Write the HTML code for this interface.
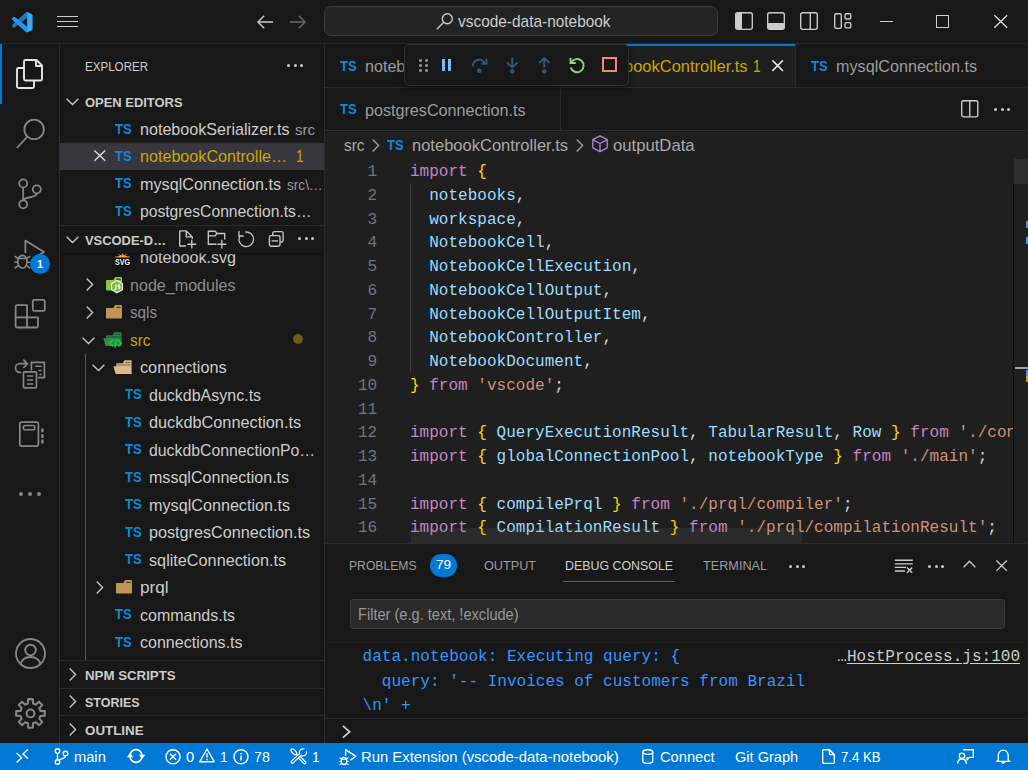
<!DOCTYPE html>
<html><head><meta charset="utf-8"><title>vscode-data-notebook</title>
<style>
*{box-sizing:border-box;margin:0;padding:0}
html,body{width:1028px;height:770px;overflow:hidden;background:#181818}
body{font-family:"Liberation Sans",sans-serif;font-size:15px;color:#ccc;position:relative}
.abs{position:absolute}
.t{position:absolute;white-space:pre;line-height:20px;transform-origin:0 0}
svg{position:absolute;overflow:visible}
.c{position:absolute;white-space:pre;font-family:"Liberation Mono",monospace;font-size:16px;line-height:20px;letter-spacing:0.019px}
.k{color:#c586c0}.b{color:#ffd700}.v{color:#9cdcfe}.s{color:#ce9178}.p{color:#d4d4d4}
</style></head><body>
<div class="abs" style="left:325px;top:44px;width:703px;height:499px;background:#1f1f1f;"></div>
<div class="abs" style="left:0px;top:43px;width:1028px;height:1px;background:#2b2b2b;"></div>
<div class="abs" style="left:59px;top:44px;width:1px;height:699px;background:#2b2b2b;"></div>
<div class="abs" style="left:324px;top:44px;width:1px;height:699px;background:#2b2b2b;"></div>
<svg style="left:11.9px;top:11.8px;" width="20.4" height="20.4" viewBox="0 0 100 100"><path d="M96.460 10.800 75.860.880C73.470-.270 70.620.210 68.750 2.080L29.320 38.040 12.150 25C10.550 23.790 8.310 23.890 6.830 25.240L1.320 30.250C-.490 31.900-.490 34.760 1.320 36.410L16.210 50 1.320 63.580C-.490 65.240-.490 68.090 1.320 69.750L6.830 74.760C8.310 76.110 10.550 76.210 12.150 75L29.320 61.960 68.750 97.920C70.620 99.790 73.470 100.270 75.860 99.120L96.470 89.200C98.630 88.160 100 85.970 100 83.570V16.430C100 14.030 98.630 11.840 96.460 10.800zM75 72.700 45.100 50 75 27.300z" fill="#2794e4" fill-rule="evenodd"/><path d="M1.320 63.580C-.490 65.240-.490 68.090 1.320 69.750L6.830 74.760C8.310 76.110 10.550 76.210 12.150 75L75 27.300V1.500C72.500.300 70.200.800 68.750 2.080z" fill="#1c78c0"/><path d="M1.320 36.410C-.490 34.760-.490 31.900 1.320 30.250L6.830 25.240C8.310 23.890 10.550 23.790 12.150 25L75 72.700V98.500C72.500 99.700 70.200 99.200 68.750 97.920z" fill="#2895e6"/><path d="M75 .600C75.300.700 75.600.750 75.860.880L96.460 10.800C98.630 11.840 100 14.030 100 16.430V83.570C100 85.970 98.630 88.160 96.470 89.200L75.860 99.120C75.600 99.250 75.300 99.300 75 99.400z" fill="#39abf6"/></svg>
<div class="abs" style="left:57px;top:16.0px;width:21px;height:1.3px;background:#ccc;"></div>
<div class="abs" style="left:57px;top:21.0px;width:21px;height:1.3px;background:#ccc;"></div>
<div class="abs" style="left:57px;top:26.0px;width:21px;height:1.3px;background:#ccc;"></div>
<svg style="left:257px;top:15px;" width="16" height="14" viewBox="0 0 16 14"><path d="M7.2.8.9 7l6.3 6.2M1 7h15" fill="none" stroke="#ccc" stroke-width="1.35"/></svg>
<svg style="left:289.5px;top:15px;" width="16" height="14" viewBox="0 0 16 14"><path d="M8.8.8 15.1 7l-6.3 6.2M15 7H0" fill="none" stroke="#6a6a6a" stroke-width="1.35"/></svg>
<div class="abs" style="left:324px;top:6px;width:394px;height:30px;background:#242424;border:1px solid #3d3d3d;border-radius:7px"></div>
<svg style="left:435.5px;top:12px;" width="18" height="18" viewBox="0 0 18 18"><circle cx="11.3" cy="6.7" r="5" fill="none" stroke="#ccc" stroke-width="1.35"/><path d="M7.8 10.2.8 17.2" stroke="#ccc" stroke-width="1.35"/></svg>
<span class="t" style="left:458.40px;top:12px;font-size:15.7px;color:#ccc;transform:scaleX(0.9829);">vscode-data-notebook</span>
<svg style="left:735px;top:12px;" width="18" height="18" viewBox="0 0 18 18"><rect x=".7" y=".7" width="16.6" height="16.6" rx="2" fill="none" stroke="#ccc" stroke-width="1.35"/><path d="M1 2.5a1.5 1.5 0 0 1 1.5-1.5H7v16H2.5A1.5 1.5 0 0 1 1 15.5z" fill="#ccc"/></svg>
<svg style="left:767px;top:12px;" width="18" height="18" viewBox="0 0 18 18"><rect x=".7" y=".7" width="16.6" height="16.6" rx="2" fill="none" stroke="#ccc" stroke-width="1.35"/><path d="M1 11h16v4.5a1.5 1.5 0 0 1-1.5 1.5h-13A1.5 1.5 0 0 1 1 15.5z" fill="#ccc"/></svg>
<svg style="left:800px;top:12px;" width="18" height="18" viewBox="0 0 18 18"><rect x=".7" y=".7" width="16.6" height="16.6" rx="2" fill="none" stroke="#ccc" stroke-width="1.35"/><path d="M10.3 1v16" stroke="#ccc" stroke-width="1.35"/></svg>
<svg style="left:833.8px;top:13px;" width="18" height="16" viewBox="0 0 18 16"><rect x=".7" y=".7" width="6.6" height="14.6" rx="1.5" fill="none" stroke="#ccc" stroke-width="1.35"/><rect x="11" y=".7" width="5.8" height="5.3" rx="1.5" fill="none" stroke="#ccc" stroke-width="1.35"/><rect x="11" y="9.6" width="5.8" height="5.3" rx="1.5" fill="none" stroke="#ccc" stroke-width="1.35"/></svg>
<div class="abs" style="left:880px;top:21px;width:13px;height:1.2px;background:#ccc;"></div>
<div class="abs" style="left:936px;top:15px;width:13px;height:13px;background:transparent;border:1.2px solid #ccc"></div>
<svg style="left:993.5px;top:15px;" width="13.5" height="13" viewBox="0 0 13.5 13"><path d="M.3.3 13.2 12.7M13.2.3.3 12.7" stroke="#ddd" stroke-width="1.3"/></svg>
<div class="abs" style="left:0px;top:44px;width:2.3px;height:59.5px;background:#0078d4;"></div>
<svg style="left:16px;top:59px;" width="27" height="30" viewBox="0 0 27 30"><path d="M9.5 1h11l5.5 5.5V20a1.5 1.5 0 0 1-1.5 1.500H9.5A1.500 1.500 0 0 1 8 20V2.500A1.500 1.500 0 0 1 9.500 1zM20 1.300V7h6" fill="none" stroke="#e4e4e4" stroke-width="1.900" stroke-linejoin="round"/><path d="M8 9H2.500A1.500 1.500 0 0 0 1 10.500V27.500A1.500 1.500 0 0 0 2.500 29H16.500A1.500 1.500 0 0 0 18 27.500V21.500" fill="none" stroke="#e4e4e4" stroke-width="1.900"/></svg>
<svg style="left:0px;top:0px;" width="60" height="200" viewBox="0 0 60 200"><circle cx="34.100" cy="129.400" r="9.750" fill="none" stroke="#868686" stroke-width="1.800"/><path d="M27.300 136.600 16.900 148" stroke="#868686" stroke-width="1.800"/></svg>
<svg style="left:0px;top:0px;" width="60" height="220" viewBox="0 0 60 220"><circle cx="23.200" cy="183.400" r="4" fill="none" stroke="#868686" stroke-width="1.800"/><circle cx="23.200" cy="204.300" r="4" fill="none" stroke="#868686" stroke-width="1.800"/><circle cx="36.800" cy="189.300" r="4" fill="none" stroke="#868686" stroke-width="1.800"/><path d="M23.200 187.400V200.300M36.800 193.300C36.800 198.500 25 196 23.300 200.300" fill="none" stroke="#868686" stroke-width="1.800"/></svg>
<svg style="left:0px;top:0px;" width="60" height="280" viewBox="0 0 60 280"><path d="M25.400 253V240.600L44 251.900 36 257" fill="none" stroke="#868686" stroke-width="1.800" stroke-linejoin="round"/><ellipse cx="22.400" cy="261.700" rx="4.700" ry="6.300" fill="none" stroke="#868686" stroke-width="1.700"/><path d="M18 258.600H26.800M14.600 256.200 18.200 258.500M30.200 256.200 26.600 258.500M14.300 262.300H17.700M27.100 262.300H30.500M14.600 268.300 18.200 265.600M30.200 268.300 26.600 265.600" fill="none" stroke="#868686" stroke-width="1.500"/></svg>
<div class="abs" style="left:30px;top:253.7px;width:20.2px;height:20.2px;background:#0078d4;border-radius:50%"></div>
<span class="t" style="left:37.10px;top:254px;font-size:10.8px;color:#fff;font-weight:700;">1</span>
<svg style="left:0px;top:0px;" width="60" height="340" viewBox="0 0 60 340"><path d="M15.600 306.700A1.500 1.500 0 0 1 17.100 305.200H27V317.300H38V326A1.500 1.500 0 0 1 36.500 327.500H17.100A1.500 1.500 0 0 1 15.600 326zM15.600 317.300H27V327.500" fill="none" stroke="#868686" stroke-width="1.800" stroke-linejoin="round"/><rect x="32.800" y="299.900" width="12" height="11" rx="1.500" fill="none" stroke="#868686" stroke-width="1.800"/></svg>
<svg style="left:0px;top:0px;" width="60" height="400" viewBox="0 0 60 400"><path d="M31.400 370.500V362.300H44.400V377.700H38" fill="none" stroke="#868686" stroke-width="1.700" stroke-linejoin="round"/><path d="M35.300 366.200H41.600M38.500 370.400H41.600M39.500 374.400H41.600" stroke="#868686" stroke-width="1.500"/><rect x="23.500" y="371.800" width="13" height="16" rx="1" fill="none" stroke="#868686" stroke-width="1.700"/><path d="M27 376.100H33.200M27 380H33.200M27 383.900H33.200" stroke="#868686" stroke-width="1.500"/><path d="M21 372.300H19.800A4.300 4.300 0 0 1 19.800 363.700H27M23.300 359.700 27.400 363.800 23.300 368" fill="none" stroke="#868686" stroke-width="1.700"/></svg>
<svg style="left:0px;top:0px;" width="60" height="460" viewBox="0 0 60 460"><rect x="19.800" y="422.100" width="18.600" height="24" rx="1.800" fill="none" stroke="#868686" stroke-width="1.700"/><rect x="23.300" y="425.600" width="11.600" height="4.200" rx="2.100" fill="none" stroke="#868686" stroke-width="1.500"/><path d="M42.400 428.600V432.300M42.400 434.200V438M42.400 439.600V443.600" stroke="#868686" stroke-width="2.400"/></svg>
<div class="abs" style="left:18.6px;top:491.5px;width:4px;height:4px;background:#868686;border-radius:50%"></div>
<div class="abs" style="left:28px;top:491.5px;width:4px;height:4px;background:#868686;border-radius:50%"></div>
<div class="abs" style="left:37.4px;top:491.5px;width:4px;height:4px;background:#868686;border-radius:50%"></div>
<svg style="left:14.5px;top:638px;" width="31" height="31" viewBox="0 0 31 31"><circle cx="15.500" cy="15.500" r="14.500" fill="none" stroke="#868686" stroke-width="1.850"/><circle cx="15.500" cy="12" r="5.300" fill="none" stroke="#868686" stroke-width="1.850"/><path d="M5.500 26c1.500-5 5-7 10-7s8.500 2 10 7" fill="none" stroke="#868686" stroke-width="1.850"/></svg>
<svg style="left:14.5px;top:698px;" width="31" height="31" viewBox="0 0 31 31"><path d="M13.23 1.08L17.77 1.08L18.04 5.52L20.69 6.62L24.02 3.67L27.23 6.88L24.28 10.21L25.38 12.86L29.82 13.13L29.82 17.67L25.38 17.94L24.28 20.59L27.23 23.92L24.02 27.13L20.69 24.18L18.04 25.28L17.77 29.72L13.23 29.72L12.96 25.28L10.31 24.18L6.98 27.13L3.77 23.92L6.72 20.59L5.62 17.94L1.18 17.67L1.18 13.13L5.62 12.86L6.72 10.21L3.77 6.88L6.98 3.67L10.31 6.62L12.96 5.52z" fill="none" stroke="#868686" stroke-width="2.100" stroke-linejoin="round"/><circle cx="15.500" cy="15.400" r="3.900" fill="none" stroke="#868686" stroke-width="2.100"/></svg>
<span class="t" style="left:84.90px;top:57px;font-size:13.4px;color:#cccccc;transform:scaleX(0.8651);">EXPLORER</span>
<div class="abs" style="left:287.0px;top:64.3px;width:3.0px;height:3.0px;background:#ccc;border-radius:50%"></div>
<div class="abs" style="left:293.5px;top:64.3px;width:3.0px;height:3.0px;background:#ccc;border-radius:50%"></div>
<div class="abs" style="left:300.0px;top:64.3px;width:3.0px;height:3.0px;background:#ccc;border-radius:50%"></div>
<svg style="left:66.0px;top:98.0px;" width="13" height="7.5" viewBox="0 0 13 7.5"><path d="M.6.700 6.500 6.600 12.400.700" fill="none" stroke="#c5c5c5" stroke-width="1.350"/></svg>
<span class="t" style="left:84.90px;top:93px;font-size:13.4px;color:#cccccc;font-weight:700;transform:scaleX(0.9668);">OPEN EDITORS</span>
<div class="abs" style="left:60px;top:143px;width:264px;height:27px;background:#37373d;"></div>
<span class="t" style="left:114.90px;top:119px;font-size:14.5px;color:#0a8ae0;font-weight:700;transform:scaleX(0.8958);">TS</span>
<span class="t" style="left:139.90px;top:120px;font-size:15.7px;color:#cccccc;transform:scaleX(1.0272);">notebookSerializer.ts</span>
<span class="t" style="left:294.90px;top:120px;font-size:14.4px;color:#9a9a9a;transform:scaleX(1.0476);">src</span>
<svg style="left:94.3px;top:150.4px;" width="11.6" height="11.2" viewBox="0 0 11.6 11.2"><path d="M.4.400 11.200 10.800M11.200.400.400 10.800" stroke="#ddd" stroke-width="1.350"/></svg>
<span class="t" style="left:114.90px;top:146px;font-size:14.5px;color:#0a8ae0;font-weight:700;transform:scaleX(0.8958);">TS</span>
<span class="t" style="left:139.90px;top:147px;font-size:15.7px;color:#cca700;transform:scaleX(1.0284);">notebookControlle…</span>
<span class="t" style="left:296.40px;top:147px;font-size:15.7px;color:#cca700;transform:scaleX(0.8701);">1</span>
<span class="t" style="left:114.90px;top:173px;font-size:14.5px;color:#0a8ae0;font-weight:700;transform:scaleX(0.8958);">TS</span>
<span class="t" style="left:139.90px;top:175px;font-size:15.7px;color:#cccccc;transform:scaleX(1.0307);">mysqlConnection.ts</span>
<span class="t" style="left:287.40px;top:175px;font-size:14.4px;color:#9a9a9a;transform:scaleX(0.9474);">src\…</span>
<span class="t" style="left:114.90px;top:201px;font-size:14.5px;color:#0a8ae0;font-weight:700;transform:scaleX(0.8958);">TS</span>
<span class="t" style="left:139.90px;top:202px;font-size:15.7px;color:#cccccc;transform:scaleX(0.9989);">postgresConnection.ts…</span>
<div class="abs" style="left:85px;top:354px;width:1px;height:306px;background:#585858;"></div>
<div class="abs" style="left:114.8px;top:255.5px;width:16.7px;height:10.3px;background:#050505;border-radius:2px"></div>
<svg style="left:115.3px;top:252.6px;" width="15.2" height="4.6" viewBox="0 0 15.2 4.6"><path d="M0 4.600V3.700L5 3.100 2.600 .500 6.300 2.400 7.600 0 8.900 2.400 12.600 .500 10.200 3.100 15.200 3.700V4.600z" fill="#ffb13b"/></svg>
<span class="t" style="left:115.30px;top:252px;font-size:9.4px;color:#fff;font-weight:700;transform:scaleX(0.7621);">SVG</span>
<span class="t" style="left:139.90px;top:248px;font-size:15.7px;color:#cccccc;transform:scaleX(1.0297);">notebook.svg</span>
<svg style="left:85.6px;top:277.8px;" width="7.5" height="13" viewBox="0 0 7.5 13"><path d="M.700.600 6.600 6.500.700 12.400" fill="none" stroke="#c5c5c5" stroke-width="1.350"/></svg>
<svg style="left:105.8px;top:277.1px;" width="16" height="13.4" viewBox="0 0 16 13.4"><path d="M0 3.600A.7.700 0 0 1 .700 2.900H7.300L8.800.500A.9.900 0 0 1 9.600 0H15.300A.7.700 0 0 1 16 .700V12.700A.7.700 0 0 1 15.300 13.400H.700A.7.700 0 0 1 0 12.700z" fill="#8bc34a"/><path d="M10.300 2.300H14.700" stroke="#181818" stroke-opacity=".8" stroke-width="1.050"/></svg>
<svg style="left:110.8px;top:280.3px;" width="12.0" height="13.2" viewBox="0 0 12.6 13.6"><path d="M6.300.400 12 3.700v6.400L6.300 13.300.600 10.100V3.700z" fill="#7fb843" stroke="#f5f5f5" stroke-width="1.150"/><path d="M5.300 4.500v4.600c0 .9-1.200 1-1.800.4M9.600 5.200c-1.800-.8-3 .900-1.200 1.500 1.700.5 1.200 2.400-1 1.700" fill="none" stroke="#ffffff" stroke-width="1.200"/></svg>
<span class="t" style="left:129.90px;top:276px;font-size:15.7px;color:#8c8c8c;transform:scaleX(1.0260);">node_modules</span>
<svg style="left:85.6px;top:305.5px;" width="7.5" height="13" viewBox="0 0 7.5 13"><path d="M.700.600 6.600 6.500.700 12.400" fill="none" stroke="#c5c5c5" stroke-width="1.350"/></svg>
<svg style="left:105.6px;top:305px;" width="16" height="13.4" viewBox="0 0 16 13.4"><path d="M0 3.600A.7.700 0 0 1 .700 2.900H7.300L8.800.500A.9.900 0 0 1 9.600 0H15.300A.7.700 0 0 1 16 .700V12.700A.7.700 0 0 1 15.300 13.400H.700A.7.700 0 0 1 0 12.700z" fill="#c09553"/><path d="M10.300 2.300H14.700" stroke="#181818" stroke-opacity=".8" stroke-width="1.050"/></svg>
<span class="t" style="left:129.90px;top:303px;font-size:15.7px;color:#8c8c8c;transform:scaleX(0.9711);">sqls</span>
<svg style="left:82.2px;top:336.5px;" width="13" height="7.5" viewBox="0 0 13 7.5"><path d="M.6.700 6.500 6.600 12.400.700" fill="none" stroke="#c5c5c5" stroke-width="1.350"/></svg>
<svg style="left:103.3px;top:331.9px;" width="18.8" height="14" viewBox="0 0 18.8 14"><path d="M3.300 4A.7.700 0 0 1 4 3.300H9.800L11.200.600A.9.900 0 0 1 12 .200H17.900A.7.700 0 0 1 18.600.900V13.300H3.300z" fill="#2a8050"/><path d="M12.300 2.500H17.300M4.500 5H17.300" stroke="#181818" stroke-opacity=".5" stroke-width=".9"/><path d="M.400 6.200H16.700L18.700 14H2.600z" fill="#2e8b57"/></svg>
<svg style="left:109.2px;top:339.3px;" width="13.2" height="8.6" viewBox="0 0 13.2 8.6"><path d="M4 .800.900 4.200 4 7.600M9.200.800 12.300 4.200 9.200 7.600M7.200 0 6 8.600" fill="none" stroke="#16d416" stroke-width="1.400"/></svg>
<span class="t" style="left:129.90px;top:331px;font-size:15.7px;color:#cca700;transform:scaleX(0.9751);">src</span>
<div class="abs" style="left:292.5px;top:334.2px;width:10px;height:10px;background:#6d5b12;border-radius:50%"></div>
<svg style="left:92.2px;top:364.0px;" width="13" height="7.5" viewBox="0 0 13 7.5"><path d="M.6.700 6.500 6.600 12.400.700" fill="none" stroke="#c5c5c5" stroke-width="1.350"/></svg>
<svg style="left:113.2px;top:359.9px;" width="18.8" height="14" viewBox="0 0 18.8 14"><path d="M3.300 4A.7.700 0 0 1 4 3.300H9.800L11.200.600A.9.900 0 0 1 12 .200H17.900A.7.700 0 0 1 18.600.900V13.300H3.300z" fill="#d9b07c"/><path d="M12.300 2.500H17.300M4.500 5H17.300" stroke="#181818" stroke-opacity=".5" stroke-width=".9"/><path d="M.400 6.200H16.700L18.700 14H2.600z" fill="#deb887"/></svg>
<span class="t" style="left:139.90px;top:358px;font-size:15.7px;color:#cccccc;transform:scaleX(1.0342);">connections</span>
<span class="t" style="left:124.50px;top:384px;font-size:14.5px;color:#0a8ae0;font-weight:700;transform:scaleX(0.8958);">TS</span>
<span class="t" style="left:149.40px;top:386px;font-size:15.7px;color:#cccccc;transform:scaleX(1.0203);">duckdbAsync.ts</span>
<span class="t" style="left:124.50px;top:412px;font-size:14.5px;color:#0a8ae0;font-weight:700;transform:scaleX(0.8958);">TS</span>
<span class="t" style="left:149.40px;top:413px;font-size:15.7px;color:#cccccc;transform:scaleX(1.0381);">duckdbConnection.ts</span>
<span class="t" style="left:124.50px;top:439px;font-size:14.5px;color:#0a8ae0;font-weight:700;transform:scaleX(0.8958);">TS</span>
<span class="t" style="left:149.40px;top:441px;font-size:15.7px;color:#cccccc;transform:scaleX(1.0077);">duckdbConnectionPo…</span>
<span class="t" style="left:124.50px;top:467px;font-size:14.5px;color:#0a8ae0;font-weight:700;transform:scaleX(0.8958);">TS</span>
<span class="t" style="left:149.40px;top:468px;font-size:15.7px;color:#cccccc;transform:scaleX(1.0234);">mssqlConnection.ts</span>
<span class="t" style="left:124.50px;top:494px;font-size:14.5px;color:#0a8ae0;font-weight:700;transform:scaleX(0.8958);">TS</span>
<span class="t" style="left:149.40px;top:496px;font-size:15.7px;color:#cccccc;transform:scaleX(1.0307);">mysqlConnection.ts</span>
<span class="t" style="left:124.50px;top:522px;font-size:14.5px;color:#0a8ae0;font-weight:700;transform:scaleX(0.8958);">TS</span>
<span class="t" style="left:149.40px;top:523px;font-size:15.7px;color:#cccccc;transform:scaleX(1.0321);">postgresConnection.ts</span>
<span class="t" style="left:124.50px;top:549px;font-size:14.5px;color:#0a8ae0;font-weight:700;transform:scaleX(0.8958);">TS</span>
<span class="t" style="left:149.40px;top:551px;font-size:15.7px;color:#cccccc;transform:scaleX(1.0342);">sqliteConnection.ts</span>
<svg style="left:95.6px;top:580.5px;" width="7.5" height="13" viewBox="0 0 7.5 13"><path d="M.700.600 6.600 6.500.700 12.400" fill="none" stroke="#c5c5c5" stroke-width="1.350"/></svg>
<svg style="left:115.5px;top:580.3px;" width="16" height="13.4" viewBox="0 0 16 13.4"><path d="M0 3.600A.7.700 0 0 1 .700 2.900H7.300L8.800.500A.9.900 0 0 1 9.600 0H15.300A.7.700 0 0 1 16 .700V12.700A.7.700 0 0 1 15.300 13.400H.700A.7.700 0 0 1 0 12.700z" fill="#c09553"/><path d="M10.300 2.300H14.700" stroke="#181818" stroke-opacity=".8" stroke-width="1.050"/></svg>
<span class="t" style="left:139.90px;top:578px;font-size:15.7px;color:#cccccc;transform:scaleX(1.0928);">prql</span>
<span class="t" style="left:114.90px;top:604px;font-size:14.5px;color:#0a8ae0;font-weight:700;transform:scaleX(0.8958);">TS</span>
<span class="t" style="left:139.90px;top:606px;font-size:15.7px;color:#cccccc;transform:scaleX(1.0193);">commands.ts</span>
<span class="t" style="left:114.90px;top:632px;font-size:14.5px;color:#0a8ae0;font-weight:700;transform:scaleX(0.8958);">TS</span>
<span class="t" style="left:139.90px;top:633px;font-size:15.7px;color:#cccccc;transform:scaleX(1.0230);">connections.ts</span>
<div class="abs" style="left:60px;top:225px;width:264px;height:27.5px;background:#181818;z-index:3;border-top:1px solid #2b2b2b;box-shadow:0 2px 3px -1px rgba(0,0,0,.4)"></div>
<svg style="left:66.0px;top:235.8px;z-index:4;" width="13" height="7.5" viewBox="0 0 13 7.5"><path d="M.6.700 6.500 6.600 12.400.700" fill="none" stroke="#c5c5c5" stroke-width="1.350"/></svg>
<span class="t" style="left:84.90px;top:231px;font-size:13.4px;color:#cccccc;font-weight:700;transform:scaleX(0.9646);z-index:4;">VSCODE-D…</span>
<svg style="left:170px;top:224px;z-index:4;" width="160" height="32" viewBox="170 224 160 32"><path d="M186 246H179.700V230.900H186.300L192.300 236.900V239M186.300 230.900V236.900H192.300" fill="none" stroke="#c5c5c5" stroke-width="1.350" stroke-linejoin="round"/><path d="M191.800 239.800V248.600M187.400 244.200H196.200" stroke="#c5c5c5" stroke-width="1.350"/></svg>
<svg style="left:170px;top:224px;z-index:4;" width="160" height="32" viewBox="170 224 160 32"><path d="M216.500 244.200H208.300V231.200H215.200L216.800 233.500H224.700V239.500M208.300 235.900H215.200L216.800 233.500" fill="none" stroke="#c5c5c5" stroke-width="1.350" stroke-linejoin="round"/><path d="M221.800 239.800V248.600M217.400 244.200H226.200" stroke="#c5c5c5" stroke-width="1.350"/></svg>
<svg style="left:170px;top:224px;z-index:4;" width="160" height="32" viewBox="170 224 160 32"><path d="M245.200 232.100A7.300 7.300 0 1 1 239.500 236.600" fill="none" stroke="#c5c5c5" stroke-width="1.350"/><path d="M238.900 231V236H243.700" fill="none" stroke="#c5c5c5" stroke-width="1.350"/></svg>
<svg style="left:170px;top:224px;z-index:4;" width="160" height="32" viewBox="170 224 160 32"><rect x="269.400" y="235.600" width="10.600" height="10.600" rx="1.600" fill="none" stroke="#c5c5c5" stroke-width="1.350"/><path d="M271.500 240.900H278" stroke="#c5c5c5" stroke-width="1.350"/><path d="M272.800 235.600V233.200A1.600 1.600 0 0 1 274.400 231.600H281.500A1.600 1.600 0 0 1 283.100 233.200V240.400A1.600 1.600 0 0 1 281.500 242H280" fill="none" stroke="#c5c5c5" stroke-width="1.350"/></svg>
<div class="abs" style="left:298.40000000000003px;top:237.3px;width:3.0px;height:3.0px;background:#ccc;z-index:4;border-radius:50%"></div>
<div class="abs" style="left:304.90000000000003px;top:237.3px;width:3.0px;height:3.0px;background:#ccc;z-index:4;border-radius:50%"></div>
<div class="abs" style="left:311.40000000000003px;top:237.3px;width:3.0px;height:3.0px;background:#ccc;z-index:4;border-radius:50%"></div>
<div class="abs" style="left:60px;top:660px;width:264px;height:28px;background:#181818;z-index:3;border-top:1px solid #2b2b2b"></div>
<svg style="left:69.3px;top:668.1px;z-index:4;" width="7.5" height="13" viewBox="0 0 7.5 13"><path d="M.700.600 6.600 6.500.700 12.400" fill="none" stroke="#c5c5c5" stroke-width="1.350"/></svg>
<span class="t" style="left:84.90px;top:666px;font-size:13.4px;color:#cccccc;font-weight:700;transform:scaleX(0.9900);z-index:4;">NPM SCRIPTS</span>
<div class="abs" style="left:60px;top:688px;width:264px;height:28px;background:#181818;z-index:3;border-top:1px solid #2b2b2b"></div>
<svg style="left:69.3px;top:695.1px;z-index:4;" width="7.5" height="13" viewBox="0 0 7.5 13"><path d="M.700.600 6.600 6.500.700 12.400" fill="none" stroke="#c5c5c5" stroke-width="1.350"/></svg>
<span class="t" style="left:84.90px;top:693px;font-size:13.4px;color:#cccccc;font-weight:700;transform:scaleX(0.9326);z-index:4;">STORIES</span>
<div class="abs" style="left:60px;top:715px;width:264px;height:28px;background:#181818;z-index:3;border-top:1px solid #2b2b2b"></div>
<svg style="left:69.3px;top:723.1px;z-index:4;" width="7.5" height="13" viewBox="0 0 7.5 13"><path d="M.700.600 6.600 6.500.700 12.400" fill="none" stroke="#c5c5c5" stroke-width="1.350"/></svg>
<span class="t" style="left:84.90px;top:721px;font-size:13.4px;color:#cccccc;font-weight:700;transform:scaleX(0.9969);z-index:4;">OUTLINE</span>
<div class="abs" style="left:325px;top:44px;width:703px;height:87.5px;background:#181818;"></div>
<div class="abs" style="left:554px;top:44px;width:241.5px;height:43px;background:#1f1f1f;"></div>
<div class="abs" style="left:554px;top:44px;width:241.5px;height:1.6px;background:#0078d4;"></div>
<div class="abs" style="left:325px;top:87px;width:703px;height:1px;background:#2b2b2b;"></div>
<div class="abs" style="left:325px;top:130px;width:703px;height:1px;background:#2b2b2b;"></div>
<div class="abs" style="left:553.5px;top:44px;width:1px;height:43px;background:#2b2b2b;"></div>
<div class="abs" style="left:795.3px;top:44px;width:1px;height:43px;background:#2b2b2b;"></div>
<div class="abs" style="left:560px;top:88px;width:1px;height:42px;background:#2b2b2b;"></div>
<span class="t" style="left:340.30px;top:56px;font-size:14.5px;color:#0a8ae0;font-weight:700;transform:scaleX(0.8958);">TS</span>
<span class="t" style="left:364.90px;top:57px;font-size:15.7px;color:#9d9d9d;transform:scaleX(1.0272);">notebookSerializer.ts</span>
<span class="t" style="left:567.30px;top:56px;font-size:14.5px;color:#0a8ae0;font-weight:700;transform:scaleX(0.8958);">TS</span>
<span class="t" style="left:591.90px;top:57px;font-size:15.7px;color:#cca700;transform:scaleX(1.0496);">notebookController.ts</span>
<span class="t" style="left:753.40px;top:57px;font-size:15.7px;color:#cca700;transform:scaleX(0.8701);">1</span>
<svg style="left:771.7px;top:60px;" width="11.3" height="11.3" viewBox="0 0 11.3 11.3"><path d="M.4.400 10.900 10.900M10.900.400.400 10.900" stroke="#e6e6e6" stroke-width="1.500"/></svg>
<span class="t" style="left:811.30px;top:56px;font-size:14.5px;color:#0a8ae0;font-weight:700;transform:scaleX(0.8958);">TS</span>
<span class="t" style="left:835.90px;top:57px;font-size:15.7px;color:#9d9d9d;transform:scaleX(1.0307);">mysqlConnection.ts</span>
<span class="t" style="left:340.30px;top:99px;font-size:14.5px;color:#0a8ae0;font-weight:700;transform:scaleX(0.8958);">TS</span>
<span class="t" style="left:364.90px;top:101px;font-size:15.7px;color:#9d9d9d;transform:scaleX(1.0289);">postgresConnection.ts</span>
<svg style="left:961px;top:100px;" width="17.5" height="17.5" viewBox="0 0 17.5 17.5"><rect x=".7" y=".7" width="16.100" height="16.100" rx="1.800" fill="none" stroke="#d0d0d0" stroke-width="1.350"/><path d="M8.750 1V16.500" stroke="#d0d0d0" stroke-width="1.350"/></svg>
<div class="abs" style="left:994.0999999999999px;top:107.5px;width:3.0px;height:3.0px;background:#ccc;border-radius:50%"></div>
<div class="abs" style="left:1000.5999999999999px;top:107.5px;width:3.0px;height:3.0px;background:#ccc;border-radius:50%"></div>
<div class="abs" style="left:1007.0999999999999px;top:107.5px;width:3.0px;height:3.0px;background:#ccc;border-radius:50%"></div>
<div class="abs" style="left:403.5px;top:44px;width:225px;height:42px;background:#181818;z-index:5;border:1px solid #303030;border-radius:5px;box-shadow:0 2px 6px rgba(0,0,0,.5)"></div>
<div class="abs" style="left:419.3px;top:59.3px;width:2.6px;height:2.6px;background:#8b8b8b;z-index:6;border-radius:50%"></div>
<div class="abs" style="left:425.1px;top:59.3px;width:2.6px;height:2.6px;background:#8b8b8b;z-index:6;border-radius:50%"></div>
<div class="abs" style="left:419.3px;top:64.2px;width:2.6px;height:2.6px;background:#8b8b8b;z-index:6;border-radius:50%"></div>
<div class="abs" style="left:425.1px;top:64.2px;width:2.6px;height:2.6px;background:#8b8b8b;z-index:6;border-radius:50%"></div>
<div class="abs" style="left:419.3px;top:69.1px;width:2.6px;height:2.6px;background:#8b8b8b;z-index:6;border-radius:50%"></div>
<div class="abs" style="left:425.1px;top:69.1px;width:2.6px;height:2.6px;background:#8b8b8b;z-index:6;border-radius:50%"></div>
<div class="abs" style="left:442.1px;top:59px;width:2.9px;height:12.3px;background:#75beff;z-index:6;"></div>
<div class="abs" style="left:448.3px;top:59px;width:2.9px;height:12.3px;background:#75beff;z-index:6;"></div>
<svg style="left:471.5px;top:57.5px;z-index:6;" width="16.5" height="15.5" viewBox="0 0 16.5 15.5"><path d="M1 8.500A6.300 6.300 0 0 1 12.800 5" fill="none" stroke="#375777" stroke-width="1.900"/><path d="M9.500 5.800H14.500V.800" fill="none" stroke="#375777" stroke-width="1.900"/><circle cx="7.300" cy="12.800" r="2.300" fill="#375777"/></svg>
<svg style="left:505.5px;top:57px;z-index:6;" width="12.5" height="17" viewBox="0 0 12.5 17"><path d="M6.250.500V10M1 5.500 6.250 10.500 11.500 5.500" fill="none" stroke="#375777" stroke-width="1.900"/><circle cx="6.250" cy="14.500" r="2.300" fill="#375777"/></svg>
<svg style="left:538.3px;top:57px;z-index:6;" width="12.5" height="17" viewBox="0 0 12.5 17"><path d="M6.250 10.500V1M1 6 6.250 1 11.500 6" fill="none" stroke="#375777" stroke-width="1.900"/><circle cx="6.250" cy="14.500" r="2.300" fill="#375777"/></svg>
<svg style="left:569px;top:57.3px;z-index:6;" width="16.5" height="16" viewBox="0 0 16.5 16"><path d="M2.200 5.500A6.600 6.600 0 1 1 1.700 10.500" fill="none" stroke="#89d185" stroke-width="1.950"/><path d="M1.500.800V6H6.800" fill="none" stroke="#89d185" stroke-width="1.950"/></svg>
<div class="abs" style="left:601.8px;top:57px;width:15.6px;height:15.4px;background:transparent;z-index:6;border:2.100px solid #f48771"></div>
<span class="t" style="left:344.40px;top:136px;font-size:15.7px;color:#a9a9a9;transform:scaleX(0.9751);">src</span>
<svg style="left:371.8px;top:138.5px;" width="7.5" height="13" viewBox="0 0 7.5 13"><path d="M.700.600 6.600 6.500.700 12.400" fill="none" stroke="#a0a0a0" stroke-width="1.350"/></svg>
<span class="t" style="left:387.30px;top:135px;font-size:14.5px;color:#0a8ae0;font-weight:700;transform:scaleX(0.8958);">TS</span>
<span class="t" style="left:412.40px;top:136px;font-size:15.7px;color:#a9a9a9;transform:scaleX(1.0530);">notebookController.ts</span>
<svg style="left:576.3px;top:138.5px;" width="7.5" height="13" viewBox="0 0 7.5 13"><path d="M.700.600 6.600 6.500.700 12.400" fill="none" stroke="#a0a0a0" stroke-width="1.350"/></svg>
<svg style="left:591.5px;top:135.3px;" width="16" height="17.5" viewBox="0 0 16 17.5"><path d="M8 .800 15.200 4.600V12.800L8 16.700 .800 12.800V4.600zM.800 4.600 8 8.500 15.200 4.600M8 8.500V16.700" fill="none" stroke="#b180d7" stroke-width="1.350" stroke-linejoin="round"/></svg>
<span class="t" style="left:612.90px;top:136px;font-size:15.7px;color:#a9a9a9;transform:scaleX(1.0630);">outputData</span>
<div class="c" style="left:410.0px;top:162px"><span class="k">import</span><span class="p"> </span><span class="b">{</span></div>
<div class="c" style="left:367.58px;top:162px;color:#6e7681">1</div>
<div class="c" style="left:410.0px;top:186px"><span class="p">  </span><span class="v">notebooks</span><span class="p">,</span></div>
<div class="c" style="left:367.58px;top:186px;color:#6e7681">2</div>
<div class="c" style="left:410.0px;top:210px"><span class="p">  </span><span class="v">workspace</span><span class="p">,</span></div>
<div class="c" style="left:367.58px;top:210px;color:#6e7681">3</div>
<div class="c" style="left:410.0px;top:233px"><span class="p">  </span><span class="v">NotebookCell</span><span class="p">,</span></div>
<div class="c" style="left:367.58px;top:233px;color:#6e7681">4</div>
<div class="c" style="left:410.0px;top:257px"><span class="p">  </span><span class="v">NotebookCellExecution</span><span class="p">,</span></div>
<div class="c" style="left:367.58px;top:257px;color:#6e7681">5</div>
<div class="c" style="left:410.0px;top:281px"><span class="p">  </span><span class="v">NotebookCellOutput</span><span class="p">,</span></div>
<div class="c" style="left:367.58px;top:281px;color:#6e7681">6</div>
<div class="c" style="left:410.0px;top:305px"><span class="p">  </span><span class="v">NotebookCellOutputItem</span><span class="p">,</span></div>
<div class="c" style="left:367.58px;top:305px;color:#6e7681">7</div>
<div class="c" style="left:410.0px;top:328px"><span class="p">  </span><span class="v">NotebookController</span><span class="p">,</span></div>
<div class="c" style="left:367.58px;top:328px;color:#6e7681">8</div>
<div class="c" style="left:410.0px;top:352px"><span class="p">  </span><span class="v">NotebookDocument</span><span class="p">,</span></div>
<div class="c" style="left:367.58px;top:352px;color:#6e7681">9</div>
<div class="c" style="left:410.0px;top:376px"><span class="b">}</span><span class="p"> </span><span class="k">from</span><span class="p"> </span><span class="s">&#x27;vscode&#x27;</span><span class="p">;</span></div>
<div class="c" style="left:357.96px;top:376px;color:#6e7681">10</div>
<div class="c" style="left:357.96px;top:400px;color:#6e7681">11</div>
<div class="c" style="left:410.0px;top:423px"><span class="k">import</span><span class="p"> </span><span class="b">{</span><span class="p"> </span><span class="v">QueryExecutionResult</span><span class="p">, </span><span class="v">TabularResult</span><span class="p">, </span><span class="v">Row</span><span class="p"> </span><span class="b">}</span><span class="p"> </span><span class="k">from</span><span class="p"> </span><span class="s">&#x27;./connections&#x27;</span><span class="p">;</span></div>
<div class="c" style="left:357.96px;top:423px;color:#6e7681">12</div>
<div class="c" style="left:410.0px;top:447px"><span class="k">import</span><span class="p"> </span><span class="b">{</span><span class="p"> </span><span class="v">globalConnectionPool</span><span class="p">, </span><span class="v">notebookType</span><span class="p"> </span><span class="b">}</span><span class="p"> </span><span class="k">from</span><span class="p"> </span><span class="s">&#x27;./main&#x27;</span><span class="p">;</span></div>
<div class="c" style="left:357.96px;top:447px;color:#6e7681">13</div>
<div class="c" style="left:357.96px;top:471px;color:#6e7681">14</div>
<div class="c" style="left:410.0px;top:495px"><span class="k">import</span><span class="p"> </span><span class="b">{</span><span class="p"> </span><span class="v">compilePrql</span><span class="p"> </span><span class="b">}</span><span class="p"> </span><span class="k">from</span><span class="p"> </span><span class="s">&#x27;./prql/compiler&#x27;</span><span class="p">;</span></div>
<div class="c" style="left:357.96px;top:495px;color:#6e7681">15</div>
<div class="c" style="left:410.0px;top:518px"><span class="k">import</span><span class="p"> </span><span class="b">{</span><span class="p"> </span><span class="v">CompilationResult</span><span class="p"> </span><span class="b">}</span><span class="p"> </span><span class="k">from</span><span class="p"> </span><span class="s">&#x27;./prql/compilationResult&#x27;</span><span class="p">;</span></div>
<div class="c" style="left:357.96px;top:518px;color:#6e7681">16</div>
<div class="abs" style="left:410px;top:183px;width:1px;height:190px;background:#3a3a3a;"></div>
<div class="abs" style="left:1014px;top:158.5px;width:14px;height:384.5px;background:#1f1f1f;"></div>
<div class="abs" style="left:1013.3px;top:184px;width:1.2px;height:359px;background:#0a0a0a;"></div>
<div class="abs" style="left:1013.5px;top:159px;width:14.5px;height:25px;background:#2e2f31;"></div>
<div class="abs" style="left:1025.5px;top:221px;width:2.5px;height:6.5px;background:#3794ff;"></div>
<div class="abs" style="left:1025.5px;top:237px;width:2.5px;height:6.5px;background:#3794ff;"></div>
<div class="abs" style="left:1014.5px;top:366.7px;width:13.5px;height:2.3px;background:#a0a0a0;"></div>
<div class="abs" style="left:1025.5px;top:370px;width:2.5px;height:5.5px;background:#3794ff;"></div>
<div class="abs" style="left:1025.5px;top:375.5px;width:2.5px;height:6.5px;background:#cca700;"></div>
<div class="abs" style="left:410.5px;top:528px;width:391px;height:15px;background:rgba(121,121,121,.13);"></div>
<div class="abs" style="left:325px;top:543px;width:703px;height:200px;background:#181818;"></div>
<div class="abs" style="left:325px;top:543px;width:703px;height:1px;background:#2b2b2b;"></div>
<span class="t" style="left:349.40px;top:556px;font-size:13.4px;color:#9d9d9d;transform:scaleX(0.9083);">PROBLEMS</span>
<div class="abs" style="left:430px;top:554px;width:27px;height:22.5px;background:#0078d4;border-radius:11.250px"></div>
<span class="t" style="left:435.70px;top:555px;font-size:13.4px;color:#fff;transform:scaleX(1.0130);">79</span>
<span class="t" style="left:483.90px;top:556px;font-size:13.4px;color:#9d9d9d;transform:scaleX(0.9465);">OUTPUT</span>
<span class="t" style="left:565.40px;top:556px;font-size:13.4px;color:#d0d0d0;transform:scaleX(0.9253);">DEBUG CONSOLE</span>
<div class="abs" style="left:563px;top:580.6px;width:112px;height:1.4px;background:#0078d4;"></div>
<span class="t" style="left:702.90px;top:556px;font-size:13.4px;color:#9d9d9d;transform:scaleX(0.9466);">TERMINAL</span>
<div class="abs" style="left:789.3px;top:564.5px;width:3.0px;height:3.0px;background:#ccc;border-radius:50%"></div>
<div class="abs" style="left:795.8px;top:564.5px;width:3.0px;height:3.0px;background:#ccc;border-radius:50%"></div>
<div class="abs" style="left:802.3px;top:564.5px;width:3.0px;height:3.0px;background:#ccc;border-radius:50%"></div>
<svg style="left:880px;top:548px;" width="60" height="36" viewBox="880 548 60 36"><path d="M894.800 560.200H912.800M894.800 563.800H912.800M894.800 567.400H906M894.800 571H905" stroke="#ccc" stroke-width="1.350"/><path d="M907 567.500 912.200 572.700M912.200 567.500 907 572.700" stroke="#ccc" stroke-width="1.350"/></svg>
<div class="abs" style="left:928.4px;top:564.5px;width:3.0px;height:3.0px;background:#ccc;border-radius:50%"></div>
<div class="abs" style="left:934.9px;top:564.5px;width:3.0px;height:3.0px;background:#ccc;border-radius:50%"></div>
<div class="abs" style="left:941.4px;top:564.5px;width:3.0px;height:3.0px;background:#ccc;border-radius:50%"></div>
<svg style="left:963px;top:560.3px;" width="13" height="8" viewBox="0 0 13 8"><path d="M.600 7.300 6.500 1.200 12.400 7.300" fill="none" stroke="#ccc" stroke-width="1.350"/></svg>
<svg style="left:996px;top:559.5px;" width="11.3" height="11.3" viewBox="0 0 11.3 11.3"><path d="M.4.400 10.900 10.900M10.900.400.400 10.900" stroke="#ccc" stroke-width="1.350"/></svg>
<div class="abs" style="left:350px;top:599.3px;width:654.7px;height:29.4px;background:#2a2a2a;border:1px solid #3a3a3a;border-radius:3px"></div>
<span class="t" style="left:358.40px;top:605px;font-size:15.7px;color:#989898;transform:scaleX(0.9303);">Filter (e.g. text, !exclude)</span>
<div class="abs" style="left:325px;top:641px;width:703px;height:1.5px;background:#1c1c1c;"></div>
<div class="c" style="left:362.6px;top:647px;color:#3794ff;">data.notebook: Executing query: {</div>
<div class="c" style="left:362.6px;top:672px;color:#3794ff;">  query: &#x27;-- Invoices of customers from Brazil</div>
<div class="c" style="left:362.6px;top:696px;color:#3794ff;">\n&#x27; +</div>
<div class="c" style="left:837.3px;top:647px;color:#ccc;">…</div>
<div class="c" style="left:846.9px;top:647px;color:#ccc;text-decoration:underline;text-underline-offset:2px">HostProcess.js:100</div>
<div class="abs" style="left:325px;top:718px;width:703px;height:1px;background:#2b2b2b;"></div>
<svg style="left:341.5px;top:724.6px;" width="9" height="13.5" viewBox="0 0 9 13.5"><path d="M.900.800 7.700 6.750.900 12.700" fill="none" stroke="#ccc" stroke-width="1.700"/></svg>
<div class="abs" style="left:0px;top:743px;width:1028px;height:27px;background:#0078d4;"></div>
<svg style="left:15.5px;top:749px;" width="12.5" height="14" viewBox="0 0 12.5 14"><path d="M.600 4 5.600 8.800.600 13.600M11.800.400 7 5 11.800 9.600" fill="none" stroke="#fff" stroke-width="1.350"/></svg>
<svg style="left:54.3px;top:747.5px;" width="14.5" height="17" viewBox="0 0 14.5 17"><circle cx="3.500" cy="3" r="2.300" fill="none" stroke="#fff" stroke-width="1.350"/><circle cx="3.500" cy="14" r="2.300" fill="none" stroke="#fff" stroke-width="1.350"/><circle cx="11.500" cy="5.500" r="2.300" fill="none" stroke="#fff" stroke-width="1.350"/><path d="M3.500 5.300V11.700M11.500 7.800c0 3-4.500 3-7 4.200" fill="none" stroke="#fff" stroke-width="1.350"/></svg>
<span class="t" style="left:74.40px;top:747px;font-size:14.6px;color:#fff;transform:scaleX(1.0050);">main</span>
<svg style="left:0px;top:740px;" width="200" height="30" viewBox="0 740 200 30"><path d="M130.100 755.500A5.900 5.900 0 0 1 141.900 755.500M141.900 756.500A5.900 5.900 0 0 1 130.100 756.500" fill="none" stroke="#fff" stroke-width="1.600"/><path d="M138.900 754.800H145.300L142.100 758.900zM126.900 757.200H133.300L130.100 753.100z" fill="#fff"/></svg>
<svg style="left:165px;top:748.5px;" width="16" height="15.5" viewBox="0 0 16 15.5"><circle cx="8" cy="7.750" r="7" fill="none" stroke="#fff" stroke-width="1.350"/><path d="M5 4.750 11 10.750M11 4.750 5 10.750" stroke="#fff" stroke-width="1.350"/></svg>
<span class="t" style="left:185.80px;top:747px;font-size:14.6px;color:#fff;transform:scaleX(1.0092);">0</span>
<svg style="left:199.2px;top:748.3px;" width="16" height="14.5" viewBox="0 0 16 14.5"><path d="M8 1 15.200 13.700H.800z" fill="none" stroke="#fff" stroke-width="1.350" stroke-linejoin="round"/><path d="M8 5.300V9.700M8 10.800V12.300" stroke="#fff" stroke-width="1.350"/></svg>
<span class="t" style="left:220.00px;top:747px;font-size:14.6px;color:#fff;transform:scaleX(0.9354);">1</span>
<svg style="left:233px;top:748.5px;" width="16" height="15.5" viewBox="0 0 16 15.5"><circle cx="8" cy="7.750" r="7" fill="none" stroke="#fff" stroke-width="1.350"/><path d="M8 6.700V11.500M8 4V5.500" stroke="#fff" stroke-width="1.450"/></svg>
<span class="t" style="left:253.60px;top:747px;font-size:14.6px;color:#fff;transform:scaleX(0.9732);">78</span>
<svg style="left:280px;top:740px;" width="40" height="30" viewBox="280 740 40 30"><path d="M298.600 756.600 304.600 762.600" stroke="#fff" stroke-width="3.600" stroke-linecap="round"/><path d="M298.600 756.600 304.600 762.600" stroke="#0078d4" stroke-width="1.100" stroke-linecap="round"/><path d="M295.300 753.300 298.800 756.800" stroke="#fff" stroke-width="1.300"/><ellipse cx="293.800" cy="751.700" rx="3.500" ry="1.800" transform="rotate(45 293.800 751.700)" fill="#0078d4" stroke="#fff" stroke-width="1.250"/><path d="M292.300 762 300.800 754" stroke="#fff" stroke-width="3.600" stroke-linecap="round"/><circle cx="303" cy="752.400" r="3.500" fill="#0078d4" stroke="#fff" stroke-width="1.350"/><path d="M292.300 762 301.500 753.400" stroke="#0078d4" stroke-width="1.100" stroke-linecap="round"/><path d="M303 752.400 307.500 748.200" stroke="#0078d4" stroke-width="3.200"/></svg>
<span class="t" style="left:311.90px;top:747px;font-size:14.6px;color:#fff;transform:scaleX(0.9354);">1</span>
<svg style="left:330px;top:740px;" width="40" height="30" viewBox="330 740 40 30"><path d="M345.600 755.800V749.600L355.900 756.300 350.300 760.200" fill="none" stroke="#fff" stroke-width="1.400" stroke-linejoin="round"/><ellipse cx="344" cy="761" rx="2.700" ry="3.500" fill="none" stroke="#fff" stroke-width="1.300"/><path d="M341.400 759.300H346.600M339.600 757.600 341.600 759M348.400 757.600 346.400 759M339.400 761.300H341.300M346.700 761.300H348.600M339.600 764.900 341.700 763.200M348.400 764.900 346.300 763.200" fill="none" stroke="#fff" stroke-width="1.100"/></svg>
<span class="t" style="left:360.90px;top:747px;font-size:14.6px;color:#fff;transform:scaleX(1.0177);">Run Extension (vscode-data-notebook)</span>
<svg style="left:642px;top:748.6px;" width="11.5" height="15" viewBox="0 0 11.5 15"><ellipse cx="5.750" cy="3" rx="5" ry="2.300" fill="none" stroke="#fff" stroke-width="1.350"/><path d="M.750 3V12A5 2.300 0 0 0 10.750 12V3" fill="none" stroke="#fff" stroke-width="1.350"/></svg>
<span class="t" style="left:660.40px;top:747px;font-size:14.6px;color:#fff;transform:scaleX(1.0044);">Connect</span>
<span class="t" style="left:735.40px;top:747px;font-size:14.6px;color:#fff;transform:scaleX(0.9974);">Git Graph</span>
<svg style="left:822px;top:748.6px;" width="13" height="15" viewBox="0 0 13 15"><path d="M7.500.700H1.500A.8.800 0 0 0 .700 1.500V13.500A.8.800 0 0 0 1.500 14.300H11.500A.8.800 0 0 0 12.300 13.500V5.500zM7.500.700V5.500H12.300" fill="none" stroke="#fff" stroke-width="1.350" stroke-linejoin="round"/></svg>
<span class="t" style="left:840.90px;top:747px;font-size:14.6px;color:#fff;transform:scaleX(0.9039);">7.4 KB</span>
<svg style="left:957px;top:749px;" width="17" height="15" viewBox="0 0 17 15"><path d="M6 .700H16.300V8.300H12.500L10 10.800V8.300" fill="none" stroke="#fff" stroke-width="1.350" stroke-linejoin="round"/><circle cx="5" cy="6.800" r="2.700" fill="none" stroke="#fff" stroke-width="1.350"/><path d="M.700 14.800C.700 11.500 2.500 10 5 10S9.300 11.500 9.300 14.800" fill="none" stroke="#fff" stroke-width="1.350"/></svg>
<svg style="left:996px;top:748.6px;" width="14.5" height="15.5" viewBox="0 0 14.5 15.5"><path d="M2.300 11.300V6.300A4.950 5.200 0 0 1 12.200 6.300V11.300L13.800 12.300H.700z" fill="none" stroke="#fff" stroke-width="1.350" stroke-linejoin="round"/><path d="M5.700 12.800A1.600 1.600 0 0 0 8.800 12.800" fill="none" stroke="#fff" stroke-width="1.350"/></svg>
</body></html>
